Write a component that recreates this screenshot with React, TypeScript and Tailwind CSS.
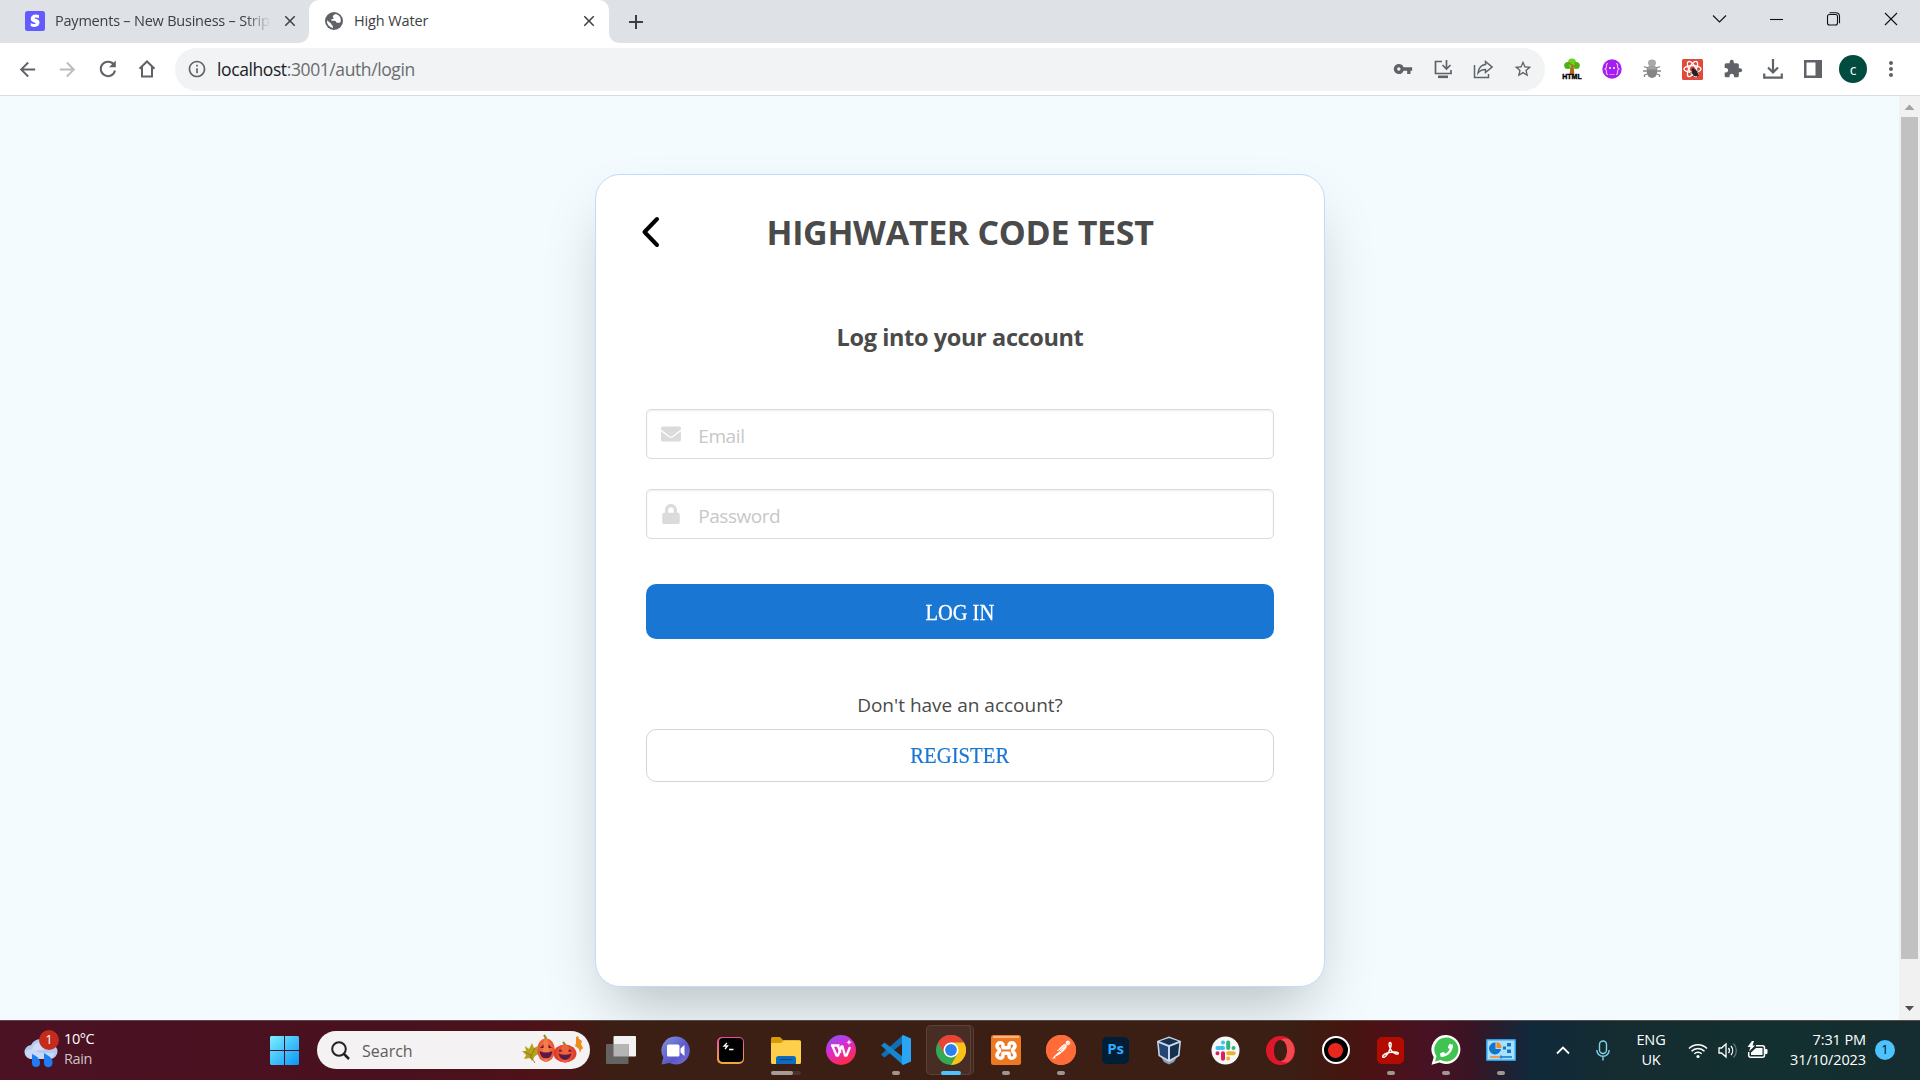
import React from "react";
import { FaEnvelope, FaLock, FaPhoneAlt } from "react-icons/fa";
import { SiPostman } from "react-icons/si";
import {
  MdArrowBack,
  MdArrowForward,
  MdClose,
  MdAdd,
  MdVpnKey,
  MdStarBorder,
  MdMoreVert,
  MdOutlineInfo,
  MdExtension,
} from "react-icons/md";

const UI = "font-['Open_Sans','Noto_Sans',sans-serif]";

function TabStrip() {
  return (
    <div className="flex h-[43px] w-full items-stretch bg-[#dee1e6] text-[#3c4043]">
      <div className="flex h-[43px] w-[309px] items-center pl-[25px] pb-[1px]">
        <svg className="h-5 w-5 shrink-0" viewBox="0 0 20 20">
          <rect width="20" height="20" rx="2.5" fill="#635bff" />
          <path d="M14 4v3.200c-1-.5-2.200-.8-3.200-.8-.8 0-1 .2-1 .6 0 1.200 4.700.6 4.700 4.600 0 2.800-2 4.400-5 4.400-1.300 0-2.700-.3-3.800-.9v-3.200c1 .7 2.600 1.200 3.700 1.200.8 0 1.200-.2 1.200-.6 0-1.300-4.800-.8-4.800-4.700C5.800 5 7.700 3.400 10.800 3.400c1.100 0 2.200.2 3.200.6z" fill="#fff" />
        </svg>
        <div className="ml-[10px] w-[216px] whitespace-nowrap text-[14.5px] tracking-[-0.22px] [mask-image:linear-gradient(to_right,#000_88%,transparent)]">
          Payments – New Business – Strip
        </div>
        <MdClose className="ml-[10px] h-[18px] w-[18px] shrink-0 text-[#3c4043]" />
      </div>
      <div className="relative flex h-[43px] w-[300px] items-center rounded-t-[10px] bg-white pb-[1px] pl-[16px]">
        <svg className="absolute -left-[10px] bottom-0 h-[10px] w-[10px]" viewBox="0 0 10 10">
          <path d="M10 0v10H0A10 10 0 0 0 10 0z" fill="#fff" />
        </svg>
        <svg className="absolute -right-[10px] bottom-0 h-[10px] w-[10px]" viewBox="0 0 10 10">
          <path d="M0 0v10h10A10 10 0 0 1 0 0z" fill="#fff" />
        </svg>
        <svg className="h-[18px] w-[18px]" viewBox="0 0 18 18">
          <circle cx="9" cy="9" r="9" fill="#5f6368" />
          <path d="M2 8.200l4 3.200c.8.500.3 1.300 1 1.800.6.500 1 .8 1 2.800A7 7 0 0 1 2 8.200zM10.800 2.100c-1.200 1-3 1.100-3 2.600 0 1 1 .8 1 1.600 0 .9-2.600.6-2.600 1.700 0 .8 1.300.8 2.800.8 1.600 0 2.300.8 2.500 1.900h3.400l1-1.600A7 7 0 0 0 10.800 2.100z" fill="#fff" />
        </svg>
        <div className="ml-[11px] w-[218px] whitespace-nowrap text-[14.5px] tracking-[-0.12px]">High Water</div>
        <MdClose className="ml-[8px] h-[18px] w-[18px] shrink-0" />
      </div>
      <MdAdd className="ml-[15px] h-6 w-6 self-center" />
      <svg className="ml-auto h-[36px] w-[214px]" viewBox="0 0 214 36" fill="none" stroke="#111" strokeWidth="1.1">
        <path d="M7 15.500l6.500 6.500 6.500-6.500" />
        <path d="M64 19.500h13" />
        <rect x="121.500" y="14.500" width="10" height="10.500" rx="2" />
        <path d="M123.500 12.700h6.500a3.500 3.500 0 0 1 3.500 3.500v7" />
        <path d="M179 13l12 12M191 13l-12 12" />
      </svg>
    </div>
  );
}

function Extensions() {
  return (
    <>
      <svg className="h-[22px] w-5" viewBox="0 0 20 22">
        <path d="M8.500 8h3l1 9h-5z" fill="#b5651d" />
        <circle cx="10" cy="4.500" r="4" fill="#6bd21c" />
        <circle cx="5.800" cy="7.500" r="3.600" fill="#4fb014" />
        <circle cx="14.200" cy="7.500" r="3.600" fill="#4fb014" />
        <circle cx="10" cy="7" r="3" fill="#6bd420" />
        <path d="M10 14V7l-3-2M10 9l3-2" stroke="#b5651d" strokeWidth="1.300" fill="none" />
        <text x="10" y="21" textAnchor="middle" textLength="19.500" lengthAdjust="spacingAndGlyphs" fontFamily="Liberation Sans" fontWeight="900" fontSize="7" fill="#000" stroke="#000" strokeWidth=".4">HTML</text>
      </svg>
      <svg className="h-5 w-5" viewBox="0 0 20 20">
        <circle cx="10" cy="10" r="9.700" fill="#a51ef0" />
        <path d="M6 4.500c-2 0-1.500 2-1.500 3.500S3 9.500 3 10s1.500.5 1.500 2-.5 3.500 1.500 3.500M14 4.500c2 0 1.500 2 1.500 3.500s1.500 1.500 1.500 2-1.500.5-1.500 2 .5 3.500-1.500 3.500" stroke="#e6b8ff" strokeWidth="1.200" fill="none" />
        <circle cx="8" cy="9" r="1" fill="#fff" />
        <circle cx="12" cy="9" r="1" fill="#fff" />
        <path d="M7.500 15.500h5" stroke="#d08bfa" strokeWidth="1" />
      </svg>
      <svg className="h-5 w-5" viewBox="0 0 20 20">
        <path d="M2 7.500l3.500 1.500M1 12h4M2.500 18v-2l3-1M18 7.500L14.500 9M19 12h-4M17.500 18v-2l-3-1" stroke="#888" strokeWidth="1.300" fill="none" />
        <ellipse cx="10" cy="4" rx="4" ry="3.400" fill="#a9a9a9" />
        <path d="M4.800 8.200q5.200-3 10.400 0v5a5.200 5.800 0 0 1-10.400 0z" fill="#858585" />
        <path d="M5.500 8.200q4.500-2.500 9 0v2.300h-9z" fill="#a2a2a2" />
      </svg>
      <svg className="h-[21px] w-[21px]" viewBox="0 0 21 21">
        <rect width="21" height="21" rx="1.500" fill="#e04a3c" />
        <g fill="none" stroke="#fff" strokeWidth="1.300">
          <ellipse cx="10.500" cy="10" rx="8.500" ry="3.400" />
          <ellipse cx="10.500" cy="10" rx="8.500" ry="3.400" transform="rotate(60 10.500 10)" />
          <ellipse cx="10.500" cy="10" rx="8.500" ry="3.400" transform="rotate(120 10.500 10)" />
        </g>
        <ellipse cx="13" cy="14" rx="2.500" ry="3.700" fill="#222" transform="rotate(-35 13 14)" />
        <circle cx="11" cy="10.500" r="1.500" fill="#222" />
        <path d="M8.500 13.500l8.500 3M10.500 18l5.500-6.500M13.500 10l2 8" stroke="#222" strokeWidth=".8" />
      </svg>
      <MdExtension className="h-[22px] w-5 text-[#5f6368]" />
      <svg className="h-5 w-5" viewBox="0 0 20 20" fill="none" stroke="#5f6368" strokeWidth="2.200">
        <path d="M10 0v13M5 8.500l5 5 5-5M1.200 14.500v4.200h17.600v-4.200" />
      </svg>
      <svg className="h-5 w-5" viewBox="0 0 20 20">
        <path d="M1 1h18v18H1z" fill="#5f6368" />
        <path d="M3.500 3.500h9v13h-9z" fill="#fff" />
      </svg>
    </>
  );
}

function Toolbar() {
  return (
    <div className="flex h-[53px] w-full items-center border-b border-[#d9dcdf] bg-white pl-[16px] pr-[15px] text-[#5f6368]">
      <MdArrowBack className="h-[23px] w-[23px]" />
      <MdArrowForward className="ml-[17px] h-[23px] w-[23px] text-[#babcbe]" />
      <svg className="ml-[19px] h-5 w-5" viewBox="0 0 20 20" fill="none" stroke="#5f6368" strokeWidth="2">
        <path d="M16.300 6.500A7.200 7.200 0 1 0 17 11.500" />
        <path d="M17.800 1.500v6.800H11z" fill="#5f6368" stroke="none" />
      </svg>
      <svg className="ml-[19px] h-5 w-5" viewBox="0 0 20 20" fill="none" stroke="#5f6368" strokeWidth="2">
        <path d="M2.500 9.800L10 2.500l7.500 7.300M5 8v9.500h10V8" />
      </svg>
      <div className="ml-[18px] flex h-[43px] w-[1370px] items-center rounded-full bg-[#f1f3f4] pl-[12px] pr-[12px]">
        <MdOutlineInfo className="h-5 w-5" />
        <div className="ml-[10px] whitespace-nowrap pt-[1px] text-[17.5px] tracking-[-0.4px] text-[#696c70]">
          <span className="text-[#202124]">localhost</span>:3001/auth/login
        </div>
        <div className="ml-auto flex items-center gap-5">
          <MdVpnKey className="h-5 w-5" />
          <svg className="h-5 w-5" viewBox="0 0 20 20" fill="none" stroke="#5f6368" strokeWidth="1.700">
            <path d="M9 2.500H2.500v12h15.500V11M13.500 1v8.500M9.500 6l4 4 4-4" />
            <path d="M5 17.800h10" strokeWidth="2.600" />
          </svg>
          <svg className="h-5 w-5" viewBox="0 0 20 20" fill="none" stroke="#5f6368" strokeWidth="1.500">
            <path d="M1.500 6v12.500H15.500V15" />
            <path d="M12.500 2.500l6.500 5.500-6.500 5.500V10.500c-3.500 0-5.500 1-7.500 3.500.5-4 2.500-8 7.500-8.500z" />
          </svg>
          <MdStarBorder className="h-[22px] w-5" />
        </div>
      </div>
      <div className="ml-[17px] flex items-center gap-5">
        <Extensions />
      </div>
      <div className="ml-[16px] flex h-7 w-7 items-center justify-center rounded-full bg-[#004d40] text-[14px] text-white">c</div>
      <MdMoreVert className="ml-[12px] h-6 w-6" />
    </div>
  );
}

function LoginCard() {
  return (
    <div className="flex h-[813px] w-[729.5px] flex-col rounded-[25px] border border-[#bfdbfe] bg-white px-[50px] text-[#4a4a4a] shadow-[0_31px_62px_-15px_rgba(0,0,0,0.25)]">
      <div className="relative mt-[32px] flex h-[50px] items-center justify-center">
        <svg className="absolute -left-[5px] top-[9px] h-[32px] w-[19px]" viewBox="0 0 19 32" fill="none" stroke="#000" strokeWidth="4" strokeLinecap="round" strokeLinejoin="round">
          <path d="M16 3L3.500 16 16 29" />
        </svg>
        <h1 className="whitespace-nowrap text-[34px] font-bold tracking-[-0.32px]">HIGHWATER CODE TEST</h1>
      </div>
      <h2 className="mt-[62px] text-center text-[23.5px] font-bold leading-[36px] tracking-[-0.38px]">Log into your account</h2>
      <div className="mt-[54px] flex h-[50px] items-center rounded-[5px] border border-[#dbdbdb] pl-[14px] shadow-[inset_0_1px_2px_rgba(10,10,10,0.07)]">
        <FaEnvelope className="h-5 w-5 text-[#dbdbdb]" />
        <span className="ml-[17px] pt-[4px] text-[19px] tracking-[-0.4px] text-[#c7c7c7]">Email</span>
      </div>
      <div className="mt-[30px] flex h-[50px] items-center rounded-[5px] border border-[#dbdbdb] pl-[14px] shadow-[inset_0_1px_2px_rgba(10,10,10,0.07)]">
        <FaLock className="h-5 w-5 text-[#dbdbdb]" />
        <span className="ml-[17px] pt-[4px] text-[19px] tracking-[-0.45px] text-[#c7c7c7]">Password</span>
      </div>
      <button className="mt-[45px] flex h-[55px] items-center justify-center rounded-[10px] bg-[#1976d2] pt-[2px] font-['Liberation_Serif',serif] text-[22.5px] text-white [-webkit-text-stroke:0.3px_#fff]">
        <span className="scale-x-[0.91]">LOG IN</span>
      </button>
      <p className="mt-[51px] text-center text-[19px] leading-[30px]">Don't have an account?</p>
      <button className="mt-[9px] flex h-[53px] items-center justify-center rounded-[10px] border border-[#d1d5db] font-['Liberation_Serif',serif] text-[22.5px] text-[#1976d2] [-webkit-text-stroke:0.2px_#1976d2]">
        <span className="scale-x-[0.92]">REGISTER</span>
      </button>
    </div>
  );
}

function PageScrollbar() {
  return (
    <div className="flex w-[21px] flex-col items-center bg-[#f1f1f1]">
      <svg className="h-[21px] w-[21px]" viewBox="0 0 21 21"><path d="M5.500 14l5-5.500 5 5.500z" fill="#a3a3a3" /></svg>
      <div className="h-[842px] w-[17px] bg-[#c1c1c1]" />
      <svg className="mt-auto h-[21px] w-[21px]" viewBox="0 0 21 21"><path d="M6 7l4.500 5 4.500-5z" fill="#505050" /></svg>
    </div>
  );
}

function TaskIcon({ children, mark }: { children: React.ReactNode; mark?: React.ReactNode }) {
  return (
    <div className="relative flex h-[59px] w-[55px] items-center justify-center pb-[1px]">
      {children}
      {mark}
    </div>
  );
}

const Dot = () => <div className="absolute bottom-[5px] left-[23.5px] h-1 w-2 rounded-full bg-[#a19593]" />;

function Pumpkins() {
  return (
    <svg className="h-[34px] w-[66px]" viewBox="0 0 66 34">
      <path d="M1 18l4 0-1-5 4 3 3-6 2 5 4-2-1 5 3 2-5 3-3 5-2-3-6 1 2-4z" fill="#b5a21a" />
      <path d="M10 24l4 6M14 15l-5 10M4 19l7 4" stroke="#8a7a10" strokeWidth=".9" fill="none" />
      <path d="M55 4l2-1 1 3 3 2-1 3 2 4-2 2-1 3-1-4-4-3 1-3z" fill="#ef8b1e" />
      <path d="M25 7c0-3-1-4-2-5" stroke="#7c9a2c" strokeWidth="2.400" fill="none" />
      <ellipse cx="25" cy="17" rx="9" ry="11.500" fill="#e85a30" />
      <ellipse cx="25" cy="17" rx="6.500" ry="11.500" fill="#f0683a" />
      <ellipse cx="25" cy="17" rx="3" ry="11.500" fill="#f77d4c" />
      <path d="M19 15l3.500-3.500V15zM27.500 15v-3.500l3.500 3.500zM18.500 18q6.500 3 13 0-1 7.500-6.500 7.500T18.500 18z" fill="#5b1848" />
      <path d="M44 13c0-2-1-3-2-4" stroke="#7c9a2c" strokeWidth="2.400" fill="none" />
      <ellipse cx="44" cy="20.500" rx="11.500" ry="9" fill="#dd3f28" />
      <ellipse cx="44" cy="20.500" rx="8.500" ry="9" fill="#e84f30" />
      <ellipse cx="44" cy="20.500" rx="4.500" ry="9" fill="#f06338" />
      <path d="M37.500 18.500q1.500-4 4 0zM47 18.500q1.500-4 4 0zM37.500 20.500q6.500 2.500 13 0-1.500 6.500-6.500 6.500t-6.500-6.500z" fill="#5b1848" />
    </svg>
  );
}

function Taskbar() {
  return (
    <div className="relative flex h-[60px] w-full items-start border-t border-[#5a4a48] bg-[linear-gradient(90deg,#4a1222_0px,#491120_400px,#4e1218_540px,#3b1e14_610px,#3b1e14_1290px,#43170f_1340px,#4c1115_1375px,#471224_1430px,#3a1424_1470px,#10293b_1530px,#152c30_1620px,#133030_1780px,#152c30_1920px)] text-white">
      <div className="flex h-[59px] w-[258px] items-center pb-[3px] pl-[24px]">
        <div className="relative h-[38px] w-[36px]">
          <svg className="h-[38px] w-[36px]" viewBox="0 0 36 38">
            <path d="M8 29a7 7 0 0 1-1-14A11 11 0 0 1 26 14a7 7 0 0 1 0 15z" fill="#b4c9f2" />
            <path d="M8 20a9 9 0 0 1 17-3c-4 3-12 4-17 3z" fill="#cfdcf6" />
            <path d="M1 22c4-4 11-3 14 1h15a7 7 0 0 1-4 6H8a7 7 0 0 1-7-7z" fill="#c9d8f6" />
            <path d="M8 24c6 3 8 5 8 9a4 4 0 0 1-8 0zM20 23c7 4 8.500 6 8.500 10a4.200 4.200 0 0 1-8.500 0z" fill="#1f7cf2" />
          </svg>
          <div className="absolute left-[15px] top-0 flex h-5 w-5 items-center justify-center rounded-full bg-[#c42b1c] text-[13px]">1</div>
        </div>
        <div className="ml-[4px] text-[14.5px] leading-[20px] tracking-[-0.4px]">
          <div>10°C</div>
          <div className="text-[#cfc0c4]">Rain</div>
        </div>
      </div>
      <svg className="ml-[12px] mt-[15px] h-[29px] w-[29px]" viewBox="0 0 29 29">
        <defs>
          <linearGradient id="win" x1="0" y1="0" x2="1" y2="1">
            <stop offset="0" stopColor="#7cf0ff" />
            <stop offset="1" stopColor="#0a95f8" />
          </linearGradient>
        </defs>
        <path d="M1 0h13v14H0V1zM15 0h13l1 1v13H15zM0 15h14v14H1l-1-1zM15 15h14v13l-1 1H15z" fill="url(#win)" />
      </svg>
      <div className="ml-[18px] mt-[10px] flex h-[38px] w-[273px] items-center rounded-full bg-[#f4f2f3] pl-[14px] text-[#5f5b5c]">
        <svg className="h-[19px] w-[19px]" viewBox="0 0 19 19" fill="none" stroke="#222" strokeWidth="2">
          <circle cx="8" cy="8" r="6.800" />
          <path d="M13 13l5 5" strokeWidth="2.500" />
        </svg>
        <span className="ml-[12px] pt-[2px] text-[16px]">Search</span>
        <div className="ml-auto mr-[3px]"><Pumpkins /></div>
      </div>
      <div className="ml-[3px] flex">
        <TaskIcon>
          <svg className="h-[28px] w-[30px]" viewBox="0 0 30 28">
            <rect x="7.500" width="22.500" height="20.500" rx="1" fill="#f2f2f2" />
            <rect y="8" width="22.500" height="20" rx="1" fill="#656361" />
            <path d="M7.500 8h15v12.500h-15z" fill="#b5b5b5" />
          </svg>
        </TaskIcon>
        <TaskIcon>
          <svg className="h-[29px] w-[29px]" viewBox="0 0 29 29">
            <defs><linearGradient id="chat" x1="0" y1="0" x2="1" y2="1"><stop stopColor="#7f96dc" /><stop offset=".6" stopColor="#5b57c9" /><stop offset="1" stopColor="#7b6fd6" /></linearGradient></defs>
            <path d="M14.500.5a14 14 0 1 1-6 26.500L.5 28.500l1.800-7A14 14 0 0 1 14.500.5z" fill="url(#chat)" />
            <rect x="6" y="8.500" width="12.500" height="12" rx="1.500" fill="#fff" />
            <path d="M19.500 12.500l4-3.500v11l-4-3.500z" fill="#fff" />
          </svg>
        </TaskIcon>
        <TaskIcon>
          <div className="h-[27px] w-[27px] rounded-[5px] bg-[linear-gradient(180deg,#ec4aa5,#f0a83e)] p-[1.5px]">
            <svg className="h-[24px] w-[24px] rounded-[4px] bg-black" viewBox="0 0 24 24" fill="none" stroke="#fff" strokeWidth="1.300">
              <path d="M8 5L5 8h3.500L6 11M10 11.500h4.500" />
            </svg>
          </div>
        </TaskIcon>
        <TaskIcon mark={<div className="absolute bottom-[5px] left-[12.5px] h-1 w-[30px] rounded-full bg-[#4d322a]"><div className="h-1 w-[22px] rounded-full bg-[#a89c97]" /></div>}>
          <svg className="h-[27px] w-[30px]" viewBox="0 0 30 27">
            <path d="M0 1.500A1.500 1.500 0 0 1 1.500 0H9l3 3h16a2 2 0 0 1 2 2v8H0z" fill="#d99a08" />
            <path d="M0 6h10l3-2.500h15.500A1.500 1.500 0 0 1 30 5v20.500a1.500 1.500 0 0 1-1.500 1.500h-27A1.500 1.500 0 0 1 0 25.500z" fill="#fdcf4b" />
            <path d="M5 27v-5.500A2.500 2.500 0 0 1 7.500 19h15a2.500 2.500 0 0 1 2.500 2.500V27z" fill="#0f6cbd" />
            <path d="M8.500 22.500h13" stroke="#0a4a85" strokeWidth="1.200" />
          </svg>
        </TaskIcon>
        <TaskIcon>
          <svg className="h-[30px] w-[30px]" viewBox="0 0 30 30">
            <defs><linearGradient id="wps" x1="0" y1="0" x2=".5" y2="1"><stop stopColor="#7a5cff" /><stop offset=".5" stopColor="#d92bd0" /><stop offset="1" stopColor="#ff2a4d" /></linearGradient></defs>
            <circle cx="15" cy="15" r="15" fill="url(#wps)" />
            <path d="M5 10.500h8.500M6.500 11l4 9.500h1.500l3.500-9h1l2.500 9h1.500l3.500-8.500M12 11l2.500 7" stroke="#fff" strokeWidth="2.300" fill="none" strokeLinejoin="round" />
            <path d="M23 4.500l.8 2 2 .8-2 .8-.8 2-.8-2-2-.8 2-.8z" fill="#fff" />
          </svg>
        </TaskIcon>
        <TaskIcon mark={<Dot />}>
          <svg className="h-[30px] w-[30px]" viewBox="0 0 30 30">
            <path d="M22 0v8L3.500 22.500 0 19.500z" fill="#0f6fb5" />
            <path d="M22 30v-8L3.500 7.500 0 10.500z" fill="#1687cf" />
            <path d="M22 0l8 3.500v23L22 30l-1-1V1z" fill="#2aa5f5" />
          </svg>
        </TaskIcon>
        <TaskIcon mark={<div className="absolute bottom-[5px] left-[17.5px] h-1 w-5 rounded-full bg-[#4cc2ff]" />}>
          <div className="absolute left-[8px] top-[4px] h-[50px] w-[43px] rounded-r-[5px] border-y border-r border-white/10 bg-white/5" />
          <div className="absolute left-[3px] top-[4px] h-[50px] w-[45px] rounded-[5px] border border-white/10 bg-[#482d25]" />
          <svg className="relative h-[30px] w-[30px]" viewBox="0 0 30 30">
            <circle cx="15" cy="15" r="15" fill="#34a853" />
            <path d="M2 7.500A15 15 0 0 1 28 7.500H15L8.500 18.700z" fill="#ea4335" />
            <path d="M28 7.500A15 15 0 0 1 15 30l6.500-11.200L15 7.500z" fill="#fbc116" />
            <circle cx="15" cy="15" r="7.500" fill="#fff" />
            <circle cx="15" cy="15" r="5.900" fill="#2b80ee" />
          </svg>
        </TaskIcon>
        <TaskIcon mark={<Dot />}>
          <svg className="h-[30px] w-[30px]" viewBox="0 0 30 30">
            <rect width="30" height="30" rx="2.500" fill="#ee7722" />
            <path d="M2 1h26v2H2z" fill="#f9b683" />
            <path d="M12 12.800V10.500A2.700 2.700 0 0 0 9.300 7.800 3.300 3.300 0 0 0 6 11.100c0 2.200 2.500 2.700 2.500 4.400S6 17.700 6 19.900a3.300 3.300 0 0 0 3.300 3.300A2.700 2.700 0 0 0 12 20.500v-2.300h6v2.300a2.700 2.700 0 0 0 2.700 2.700 3.300 3.300 0 0 0 3.300-3.300c0-2.200-2.500-2.700-2.500-4.400s2.500-2.200 2.500-4.400a3.300 3.300 0 0 0-3.300-3.300 2.700 2.700 0 0 0-2.700 2.700v2.300z" fill="none" stroke="#fff" strokeWidth="3.600" strokeLinejoin="round" />
          </svg>
        </TaskIcon>
        <TaskIcon mark={<Dot />}>
          <div className="flex h-[30px] w-[30px] items-center justify-center rounded-full bg-[radial-gradient(circle,#fff_60%,#ff6c37_62%)]">
            <SiPostman className="h-[30px] w-[30px] text-[#ff6c37]" />
          </div>
        </TaskIcon>
        <TaskIcon>
          <div className="flex h-[27px] w-[27px] items-center justify-center rounded-[5px] bg-[#001e36] pb-[4px] text-[15px] font-bold tracking-[-0.3px] text-[#31a8ff]">Ps</div>
        </TaskIcon>
        <TaskIcon>
          <svg className="mr-[4px] h-[29px] w-[26px]" viewBox="0 0 26 29">
            <path d="M5 21l3 5 5 2.500 5-2.500 3-5-3-4H8z" fill="#8d9cb0" />
            <path d="M13 .5l12 4.500-1.500 15L13 26 2.500 20 1 5z" fill="#c9d8ea" />
            <path d="M13 2l9.500 3.300L13 9 3.500 5.300z" fill="#16304f" />
            <path d="M2.700 7L12 10.700v12.800L4 19z" fill="#234672" />
            <path d="M23.300 7L14 10.700v12.800L22 19z" fill="#16304f" />
          </svg>
        </TaskIcon>
        <TaskIcon>
          <svg className="h-[29px] w-[29px]" viewBox="0 0 29 29" strokeWidth="4" strokeLinecap="round">
            <circle cx="14.500" cy="14.500" r="14" fill="#f7f7f7" />
            <path d="M12 6.500v0M6.500 12H12" stroke="#36c5f0" />
            <path d="M17.200 6.500V12M22.500 12v0" stroke="#2eb67d" />
            <path d="M17.200 17.200h5.500M17.200 22.500v0" stroke="#ecb22e" />
            <path d="M12 17.200v5.500M6.500 17.200v0" stroke="#e01e5a" />
          </svg>
        </TaskIcon>
        <TaskIcon>
          <svg className="h-[29px] w-[29px]" viewBox="0 0 29 29">
            <path d="M14.500 0a14.500 14.500 0 1 0 0 29 14.500 14.500 0 0 0 0-29zm0 4c4 0 6.500 4.500 6.500 10.500S18.500 25 14.500 25 8 20.500 8 14.500 10.500 4 14.500 4z" fill="#e0162b" fillRule="evenodd" />
            <path d="M14.500 4a12 12 0 0 1 8-1.200 14.500 14.500 0 0 1 0 23.400 12 12 0 0 1-8-1.200c4 0 6.500-4.500 6.500-10.500S18.500 4 14.500 4z" fill="#f2484f" />
          </svg>
        </TaskIcon>
        <TaskIcon>
          <div className="flex h-[28px] w-[28px] items-center justify-center rounded-full border-2 border-white bg-black">
            <div className="h-[15px] w-[15px] rounded-full bg-[#e8281f]" />
          </div>
        </TaskIcon>
        <TaskIcon mark={<Dot />}>
          <div className="flex h-[27px] w-[27px] items-center justify-center rounded-[5px] bg-[#b30b00]">
            <svg className="h-[19px] w-[19px]" viewBox="0 0 19 19" fill="none" stroke="#fff" strokeWidth="1.500" strokeLinejoin="round">
              <path d="M9 1.500c2 0 1.200 5-1.300 9.500-1.700 3-4 5.800-5.600 5.300-1.500-1 1.300-3.800 6-4.800 4.500-1 9.400-.7 9.200.9-.3 1.700-4.300.3-6.800-2.700C8 6.500 7.400 1.500 9 1.500z" />
            </svg>
          </div>
        </TaskIcon>
        <TaskIcon mark={<Dot />}>
          <div className="relative flex h-[30px] w-[30px] items-center justify-center">
            <svg className="absolute h-[30px] w-[30px]" viewBox="0 0 30 30">
              <path d="M15.500 0a14.500 14.500 0 1 1-7 27.500L.5 29.700l2.200-7.500A14.500 14.500 0 0 1 15.500 0z" fill="#fff" />
              <path d="M15.500 2.500a12 12 0 1 1-6 22.500L4 26.500l1.500-5.200A12 12 0 0 1 15.500 2.500z" fill="#41c351" />
            </svg>
            <FaPhoneAlt className="relative left-[1px] h-[13px] w-[13px] -scale-x-100 text-white" />
          </div>
        </TaskIcon>
        <TaskIcon mark={<Dot />}>
          <svg className="h-[22px] w-[30px]" viewBox="0 0 30 22">
            <rect width="30" height="22" rx="1" fill="#2b9fe6" />
            <rect x="1.500" y="1.500" width="27" height="19" fill="#a9e0fb" />
            <path d="M9.500 10V3.500a6 6 0 1 0 5.500 6.500z" fill="#1374c9" />
            <path d="M10.500 9V3a6 6 0 0 1 5 6z" fill="#f58b1f" />
            <path d="M21 4h4v3.500h-4zM21 10.500h4V14h-4zM17 7.500h3v3h-3z" fill="#1374c9" />
            <path d="M4 18h10" stroke="#f58b1f" strokeWidth="1.500" />
            <path d="M15 18h11M15 16.500v3" stroke="#1374c9" strokeWidth="1.500" />
          </svg>
        </TaskIcon>
      </div>
      <div className="flex h-[59px] flex-1 items-center pb-[1px]">
        <svg className="ml-[28px] h-[10px] w-[14px]" viewBox="0 0 14 10" fill="none" stroke="#fff" strokeWidth="1.800"><path d="M1 8.500l6-6 6 6" /></svg>
        <svg className="ml-[26px] h-[21px] w-[14px]" viewBox="0 0 14 21" fill="none" stroke="#7fd3e8" strokeWidth="1.400">
          <rect x="3.500" y="1" width="7" height="12.500" rx="3.500" />
          <path d="M.8 10a6.200 6.200 0 0 0 12.400 0M7 16.500V20.500" />
        </svg>
        <div className="ml-[26px] w-[30px] text-center text-[14.5px] leading-[20px] tracking-[-0.1px]">
          <div>ENG</div>
          <div>UK</div>
        </div>
        <svg className="ml-[22px] h-[17px] w-[20px]" viewBox="0 0 20 17" fill="none" stroke="#fff" strokeWidth="1.500">
          <path d="M1 6.500a12.500 12.500 0 0 1 18 0M3.500 9.200a9 9 0 0 1 13 0M6.300 11.800a5.300 5.300 0 0 1 7.400 0" />
          <circle cx="10" cy="14.500" r="1.600" fill="#fff" stroke="none" />
        </svg>
        <svg className="ml-[10px] h-[17px] w-[20px]" viewBox="0 0 20 17" fill="none" stroke="#fff" strokeWidth="1.300">
          <path d="M1 6h2.500L8 2v13l-4.500-4H1zM10.500 6a4 4 0 0 1 0 5M13 4a7 7 0 0 1 0 9" />
          <path d="M15.500 1.500a10 10 0 0 1 0 14" stroke="#5f7274" />
        </svg>
        <svg className="ml-[9px] h-[18px] w-[21px]" viewBox="0 0 21 18">
          <path d="M9 4.700h6.500a2 2 0 0 1 2 2v7.600a2 2 0 0 1-2 2H3.700a2 2 0 0 1-2-2V11" fill="none" stroke="#fff" strokeWidth="1.500" />
          <path d="M9 7h6.500v7H4v-2.500z" fill="#fff" />
          <path d="M18.500 8.500H20v4h-1.500z" fill="#fff" stroke="#fff" />
          <path d="M5 0L.5 6h3L2 10.500 8 4.500H5.500L7 0z" fill="#fff" />
        </svg>
        <div className="ml-auto text-right text-[14.5px] leading-[20px] tracking-[-0.1px]">
          <div>7:31 PM</div>
          <div>31/10/2023</div>
        </div>
        <div className="ml-[9px] mr-[25px] flex h-5 w-5 items-center justify-center rounded-full bg-[#4cc2ff] text-[12px] text-black">1</div>
      </div>
    </div>
  );
}

export default function App() {
  return (
    <div className={"flex h-[1080px] w-[1920px] flex-col overflow-hidden " + UI}>
      <TabStrip />
      <Toolbar />
      <div className="flex h-[924px] bg-[#f3fbff]">
        <div className="flex flex-1 justify-center overflow-hidden pl-[21px] pt-[78px]">
          <LoginCard />
        </div>
        <PageScrollbar />
      </div>
      <Taskbar />
    </div>
  );
}
